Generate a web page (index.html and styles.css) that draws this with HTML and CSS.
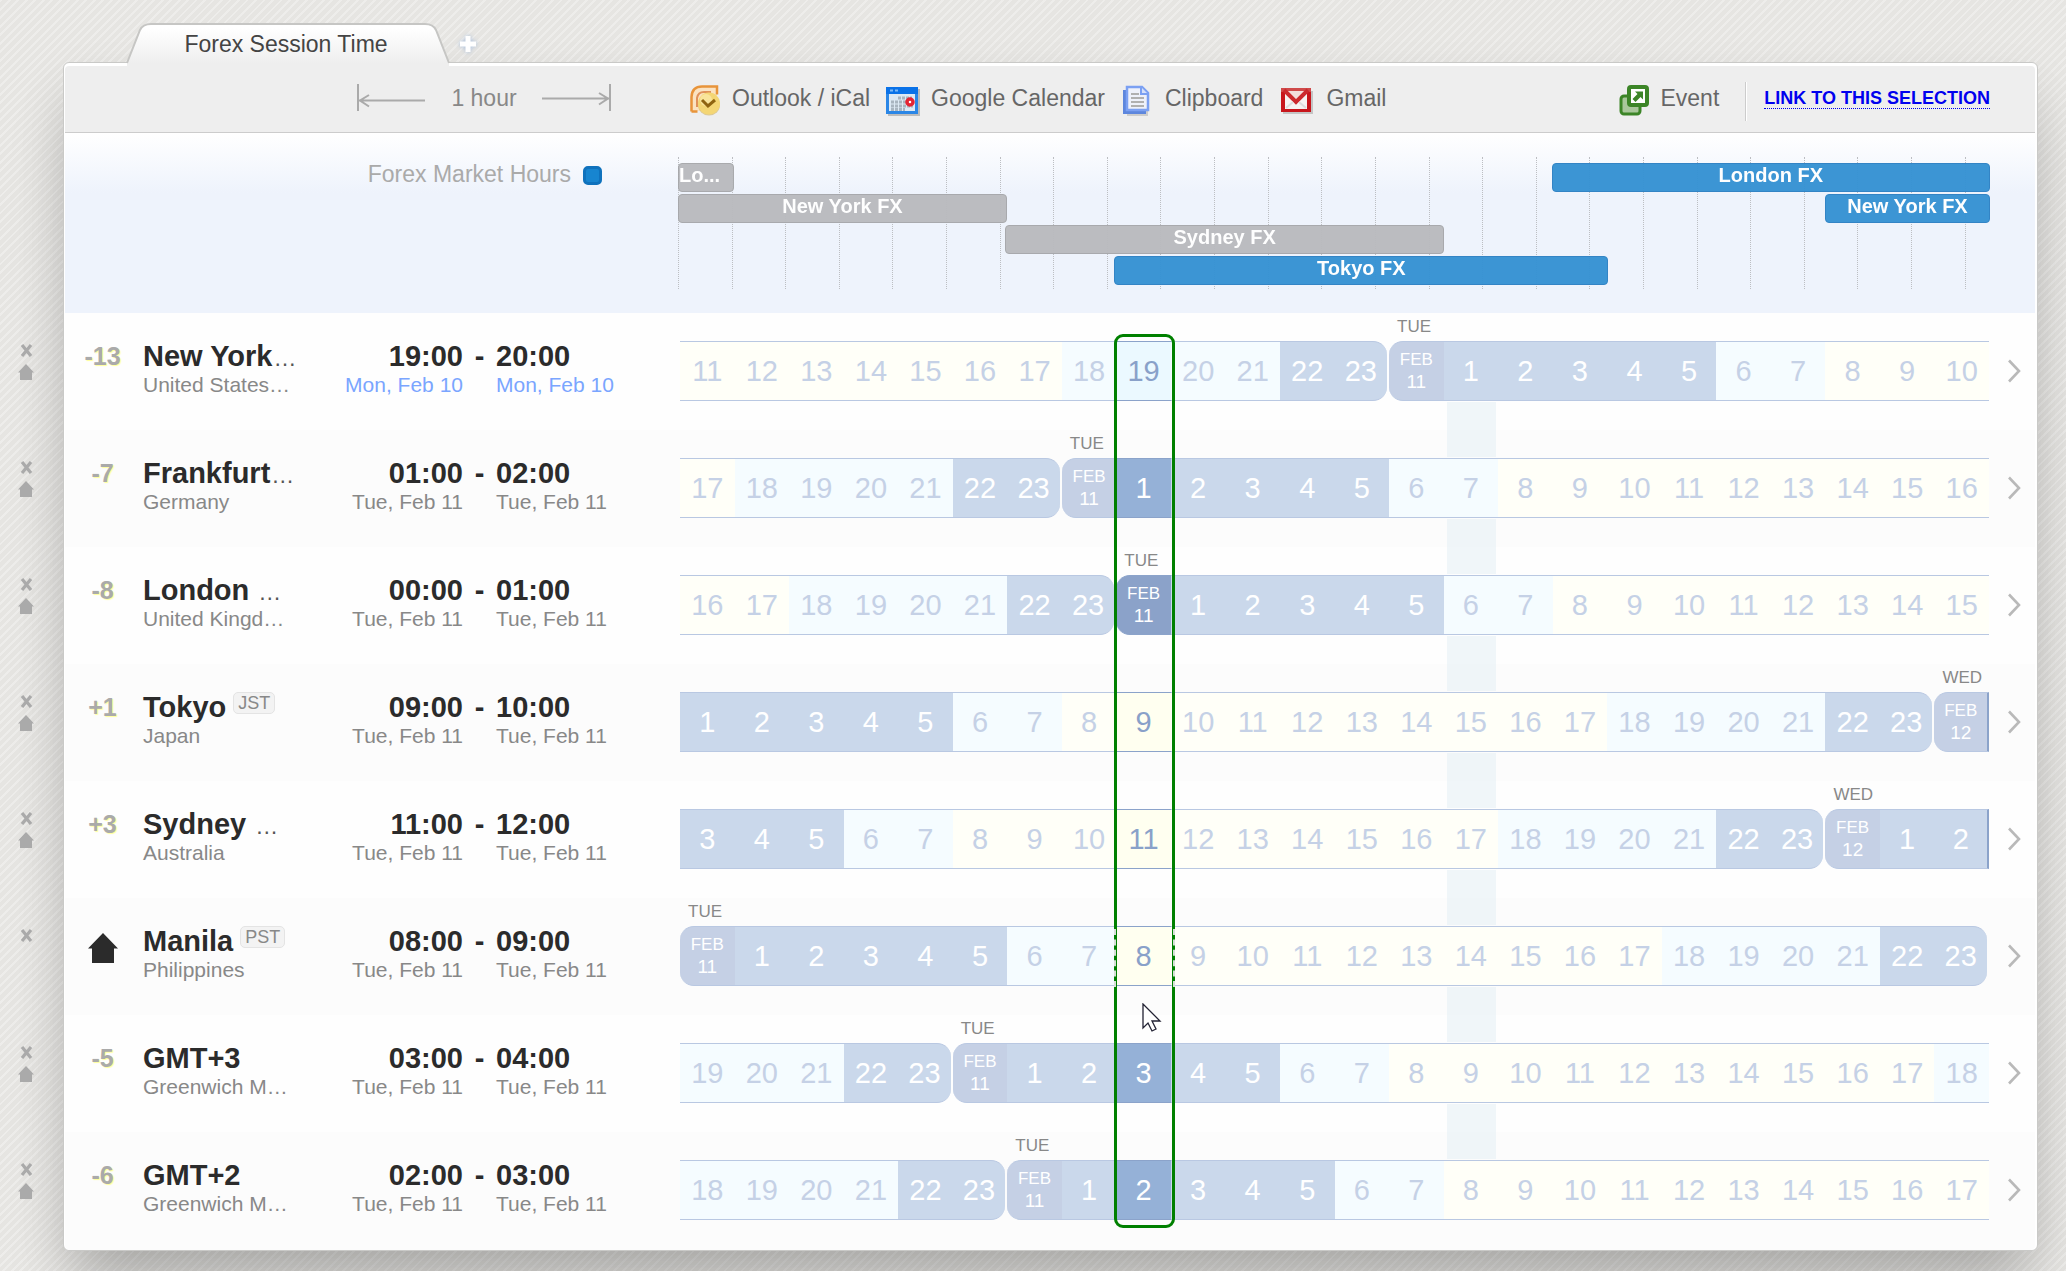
FILE: index.html
```html
<!DOCTYPE html>
<html lang="en">
<head>
<meta charset="utf-8">
<title>Forex Session Time</title>
<link rel="stylesheet" href="styles.css">
</head>
<body>
<svg class="sprites" aria-hidden="true">
  <symbol id="i-close" viewBox="0 0 13 13"><path d="M2 1l9 11M11 1l-9 11" stroke="#aaa" stroke-width="3.2" fill="none"/></symbol>
  <symbol id="i-home" viewBox="0 0 16 16"><path d="M8 0l8 8.500h-2V16H2V8.500H0z" fill="#aaa"/></symbol>
  <symbol id="i-bighome" viewBox="0 0 30 30"><path d="M15 0l15 15.500h-4V30H4V15.500H0z" fill="#2b2b2b"/></symbol>
  <symbol id="i-next" viewBox="0 0 14 24"><path d="M2 1.500l10 10.500L2 22.500" stroke="#b9b9b9" stroke-width="2.600" fill="none"/></symbol>
</svg>
<nav class="tabs">
  <a class="tab" href="#session">
    <svg class="tab-shape" viewBox="0 0 324 43" aria-hidden="true">
      <defs><linearGradient id="tabfill" x1="0" y1="0" x2="0" y2="1"><stop offset=".1" stop-color="#fff"/><stop offset=".95" stop-color="#eee"/></linearGradient></defs>
      <path d="M1 40L14 7Q17 1 25 1H299Q307 1 310 7L323 40V43H1z" fill="url(#tabfill)"/>
      <path d="M1 40L14 7Q17 1 25 1H299Q307 1 310 7L323 40" fill="none" stroke="#c6c6c4" stroke-width="2"/>
    </svg>
    <span class="tab-label">Forex Session Time</span>
  </a>
  <button class="add" aria-label="Add tab"><svg width="20" height="20" viewBox="0 0 20 20"><path d="M10 2v16M2 10h16" stroke="#fff" stroke-width="5"/></svg></button>
</nav>
<main class="panel" id="session">
  <header class="toolbar">
    <div class="duration">
      <svg width="70" height="28" viewBox="0 0 70 28" fill="none" stroke="#aaa" stroke-width="2"><path d="M1 0v27M2 16.500h66M12 11L3 16.500l9 6"/></svg>
      <span>1 hour</span>
      <svg width="70" height="28" viewBox="0 0 70 28" fill="none" stroke="#aaa" stroke-width="2"><path d="M69 0v27M1 14.500h67M58 9l9 5.500-9 6"/></svg>
    </div>
    <div class="exports">
      <button><svg width="32" height="32" viewBox="0 0 32 32"><path d="M2 27V12Q3 2 13 2h15v25z" fill="#fbe3c2"/><path d="M2.500 27.500V13Q3 2.500 13 2.500h15v8M2.500 27.500h6" fill="none" stroke="#e8943a" stroke-width="2.500"/><path d="M8 23V14Q9 8 15 8h7" fill="none" stroke="#e0925a" stroke-width="2"/><ellipse cx="20" cy="21" rx="11" ry="10.500" fill="#c9a440" opacity=".5"/><circle cx="20" cy="19.500" r="11" fill="#f4d674"/><circle cx="17" cy="16" r="6" fill="#fbe9ac" opacity=".7"/><path d="M13 16l6 6 7-6" fill="none" stroke="#8f6410" stroke-width="3"/></svg>Outlook / iCal</button>
      <button><svg width="34" height="32" viewBox="0 0 34 32"><path d="M2 5h32v27H2z" fill="#bbb"/><path d="M0 3h32v27H0z" fill="#2a86e6"/><path d="M0 3h32v7H0z" fill="#0a72e8"/><path d="M3 10h26v17H3z" fill="#dde9f4"/><path d="M4 6.500h3m2 0h3" stroke="#7db9f7" stroke-width="2"/><path d="M12 14h14M5 18h17M5 22h22M5 25.500h14" stroke="#a9b5c0" stroke-width="3" stroke-dasharray="3 1"/><circle cx="24" cy="18" r="3" fill="#fff" stroke="#e42433" stroke-width="3.500"/></svg>Google Calendar</button>
      <button><svg width="29" height="32" viewBox="0 0 29 32"><path d="M4 27h21v5H4z" fill="#ccc"/><path d="M0 6h6v19h17v5H0z" fill="#5d86dd"/><path d="M4 3h15l6 6v17H4z" fill="#eef1fa" stroke="#7ba0f2" stroke-width="2.500"/><path d="M18 3v7h7" fill="#d5e0fa" stroke="#7ba0f2" stroke-width="2"/><path d="M8 10h8M8 14h13M8 18h13M8 22h13" stroke="#b0b0b0" stroke-width="2"/></svg>Clipboard</button>
      <button><svg width="32" height="32" viewBox="0 0 32 32"><path d="M2 7h30v23H2z" fill="#c4c4c4"/><path d="M0 4h30v24H0z" fill="#c8161c"/><path d="M0 4h30v4H0z" fill="#cf4a4a"/><path d="M4 8h22v17H4z" fill="#f6f3f2"/><path d="M4 7h22L15 16z" fill="#f3dedc"/><path d="M3 6l12 12L27 6" fill="none" stroke="#cc2a2e" stroke-width="4"/><path d="M5 24l7-6M25 24l-7-6" stroke="#ddd" stroke-width="2"/></svg>Gmail</button>
    </div>
    <div class="actions">
      <button><svg width="30" height="32" viewBox="0 0 30 32"><rect x="2" y="12" width="19" height="18" rx="3" fill="#a9c79b" stroke="#3c8527" stroke-width="3"/><rect x="10" y="3" width="18" height="18" rx="2" fill="#fff" stroke="#3c8527" stroke-width="4"/><path d="M16 7.500h8v8l-2.500-2.500-5 5-3-3 5-5z" fill="#3c8527"/></svg>Event</button>
      <a class="permalink" href="#selection">LINK TO THIS SELECTION</a>
    </div>
  </header>
  <section class="market">
    <div class="legend"><span>Forex Market Hours</span><i class="swatch"></i></div>
    <div class="sessions">
      <div class="ticks" id="ticks"></div>
      <div class="lane"><div class="fx past clipped" style="grid-column:1 / span 1">Lo...</div><div class="fx" style="grid-column:17 / span 8">London FX</div></div>
      <div class="lane"><div class="fx past" style="grid-column:1 / span 6">New York FX</div><div class="fx" style="grid-column:22 / span 3">New York FX</div></div>
      <div class="lane"><div class="fx past" style="grid-column:7 / span 8">Sydney FX</div></div>
      <div class="lane"><div class="fx" style="grid-column:9 / span 9">Tokyo FX</div></div>
    </div>
  </section>
  <section class="zones" id="zones"></section>
</main>
<svg class="cursor" width="20" height="30" viewBox="0 0 20 30" aria-hidden="true"><path d="M1 1v24l5-5 4 8 4-2-4-8h8z" fill="#fff" stroke="#223" stroke-width="1.300"/></svg>
<script src="app.js"></script>
</body>
</html>
```
FILE: styles.css
```css
* { box-sizing: border-box; }
body {
  margin: 0;
  padding: 23px 28px 20px 63px;
  font-family: "Liberation Sans", Arial, sans-serif;
  color: #2b2b2b;
  background: #e6e5e2;
  position: relative;
  overflow-x: hidden;
}
body::before {
  content: "";
  position: absolute;
  inset: 0;
  z-index: -1;
  background: repeating-linear-gradient(135deg, rgba(255,255,255,.3) 0 2px, transparent 2px 6px);
}
button { font: inherit; color: inherit; border: 0; padding: 0; background: none; cursor: pointer; }
.sprites { display: none; }
svg { display: block; flex: none; }

.tabs { display: flex; align-items: flex-start; gap: 8px; padding-left: 63px; position: relative; z-index: 2; margin-bottom: -4px; }
.tab { position: relative; width: 324px; height: 43px; padding-right: 4px; color: #444; font-size: 23px; line-height: 42px; text-align: center; text-decoration: none; }
.tab-shape { position: absolute; inset: 0; width: 100%; height: 100%; }
.tab-label { position: relative; }
.add { margin-top: 11px; filter: drop-shadow(0 0 2px #a9bedb); }

.panel {
  position: relative;
  padding: 3px 2px 0 1px;
  border: 1px solid #c9c9c7;
  border-radius: 6px;
  background: #fff;
  box-shadow: 0 45px 60px -12px rgba(0,0,0,.22), 0 20px 50px rgba(0,0,0,.08);
}
.toolbar {
  display: flex;
  align-items: center;
  height: 67px;
  padding: 0 45px 2px 292px;
  font-size: 23px;
  color: #666;
  background: #eee;
  border-bottom: 1px solid #ccc;
  border-radius: 4px 4px 0 0;
}
.duration { display: flex; align-items: center; justify-content: space-between; width: 254px; color: #888; }
.exports { display: flex; gap: 16px; margin-left: 78px; }
.exports button, .actions button { display: flex; align-items: center; gap: 11px; white-space: nowrap; }
.exports svg, .actions svg { margin-top: 4px; }
.exports button:nth-child(n+3) { gap: 13px; margin-left: 2px; }
.actions { display: flex; align-items: center; margin-left: auto; }
.permalink {
  margin-left: 45px;
  position: relative;
  font-size: 18px;
  line-height: 20px;
  font-weight: bold;
  color: #00e;
  text-decoration: none;
  border-bottom: 1px dotted #00e;
}
.permalink::before { content: ""; position: absolute; left: -19px; top: -6px; height: 39px; border-left: 1px solid #ccc; border-right: 1px solid #fff; }

.market {
  display: flex;
  height: 180px;
  padding: 24px 45px 0 0;
  background: linear-gradient(#fff, #eef3fc 60px);
}
.legend { display: flex; justify-content: flex-end; width: 537px; gap: 12px; margin-right: 76px; font-size: 23px; line-height: 34px; color: #aaa; }
.swatch { width: 19px; height: 19px; margin-top: 9px; border: 3px solid #0f72bd; border-radius: 5px; background: #1785d0; }
.sessions { position: relative; flex: 1; height: 132px; padding-top: 6px; display: flex; flex-direction: column; gap: 2px; }
.ticks { position: absolute; inset: 0; display: flex; pointer-events: none; }
.ticks i { width: 4.0864%; border-left: 1px dotted #bcbec2; flex: none; }
.lane { position: relative; display: grid; grid-template-columns: repeat(24, 1fr); }
.fx {
  height: 29px;
  margin: 0 -1px 0 -1px;
  border: 1px solid #2c80c3;
  border-radius: 4px;
  background: #3592d3;
  color: #fff;
  font-size: 20px;
  line-height: 23px;
  font-weight: bold;
  text-align: center;
  white-space: nowrap;
  min-width: 0;
  opacity: .96;
}
.lane:nth-child(-n+3) .fx:first-child { margin-left: 0; }
.fx.clipped { text-align: left; }
.lane:nth-child(-n+3) .fx:last-child { margin-right: 0; }
.fx.past { background: #b9babe; border-color: #a6a7aa; }

.zones { position: relative; }
.zone { position: relative; display: flex; height: 117px; padding: 0 14px 0 0; background: #fefefe; }
.zone:last-of-type { height: 118px; border-radius: 0 0 5px 5px; }
.zone:nth-child(even) { background: #fcfcfc; }
.side { position: absolute; left: -47px; top: 31px; display: flex; flex-direction: column; align-items: center; gap: 7px; width: 16px; }
.offset { width: 75px; padding-top: 29px; font-size: 25px; line-height: 28px; font-weight: bold; text-align: center; color: #aaa; text-shadow: 1px 1px 1px #ff9; }
.offset svg { margin: 6px auto 0; }
.place { width: 196px; margin-left: 3px; padding-top: 27px; font-size: 21px; color: #888; white-space: nowrap; }
.name { display: flex; align-items: baseline; gap: 1px; height: 32px; font-size: 23px; line-height: 32px; color: #555; }
.name b { font-size: 29px; color: #2b2b2b; }
.name small { align-self: flex-start; margin: 1px 0 0 6px; padding: 0 4px; border: 1px solid #e4e4e4; border-radius: 5px; background: #f3f3f3; font-size: 18px; line-height: 20px; color: #888; }
.sub { line-height: 26px; }
.times { display: grid; grid-template-columns: 124px 33px 124px; align-content: start; padding-top: 27px; font-size: 21px; line-height: 26px; color: #888; white-space: nowrap; }
.times b { font-size: 29px; line-height: 32px; color: #2b2b2b; }
.times .dash { text-align: center; }
.times .end { text-align: right; }
.alt { color: #7aa5ff; }
.bar { position: relative; z-index: 1; display: grid; grid-template-columns: repeat(24, 1fr); flex: 1; height: 60px; margin: 28px 0 0 60px; }
.bar > span {
  position: relative;
  min-width: 0;
  border: solid #b9c8e2;
  border-width: 1px 0;
  font-size: 29px;
  line-height: 58px;
  text-align: center;
  color: #c5d1e6;
}
.bar .work { background: #fffff8; }
.bar .edge { background: #f5fcff; }
.bar .night { background: #cad8eb; color: #fff; }
.bar .late { border-radius: 0 14px 14px 0; margin-right: 2px; }
.bar .date { display: flex; flex-direction: column; justify-content: center; background: #c5d0e5; color: #fff; font-size: 19px; line-height: 22px; border-radius: 14px 0 0 14px; }
.date small { font-size: 17px; line-height: 22px; }
.date em { position: absolute; left: 8px; top: -25px; font-size: 17px; line-height: 20px; font-style: normal; color: #888; }
.bar .on { border-color: #8ba3ca; color: #89a1c9; }
.bar .work.on { background: #fffff0; }
.bar .edge.on { background: #ebf9ff; }
.bar .night.on { background: #95b1d7; color: #fff; }
.bar .date.on { background: #8ba2c9; color: #fff; }
.bar .tail { border-right: 2px solid #8ba3ca; }
.zone:not(:last-of-type) .bar::after { content: ""; position: absolute; left: 58.6%; top: 61px; width: 49px; height: 55px; background: rgba(200,223,236,.25); }
.next { height: 24px; margin: 46px 0 0 18px; }
.frame { position: absolute; z-index: 3; left: 613px; right: 45px; top: 21px; bottom: 22px; pointer-events: none; }
.frame i { position: absolute; left: 33.2%; top: 0; bottom: 0; width: 61px; border: 3px solid #008000; border-radius: 9px; }
.frame i::before { content: ""; position: absolute; left: -3px; right: -3px; top: 592px; height: 58px; border: dashed #d8dfd8; border-width: 0 2px; }
.cursor { position: absolute; left: 1142px; top: 1003px; z-index: 4; }
```
FILE: app.js
```js
const TICKS = 25;
document.getElementById('ticks').innerHTML = '<i></i>'.repeat(TICKS);

const T = 'Tue, Feb 11';
const zones = [
  { off: '-13', name: 'New York', cut: true, sub: 'United States…', from: '19:00', to: '20:00', d: 'Mon, Feb 10', alt: true, start: 11, day: 'TUE', num: 11 },
  { off: '-7', name: 'Frankfurt', cut: true, sub: 'Germany', from: '01:00', to: '02:00', d: T, start: 17, day: 'TUE', num: 11 },
  { off: '-8', name: 'London&nbsp;', cut: true, sub: 'United Kingd…', from: '00:00', to: '01:00', d: T, start: 16, day: 'TUE', num: 11 },
  { off: '+1', name: 'Tokyo', tag: 'JST', sub: 'Japan', from: '09:00', to: '10:00', d: T, start: 1, day: 'WED', num: 12 },
  { off: '+3', name: 'Sydney&nbsp;', cut: true, sub: 'Australia', from: '11:00', to: '12:00', d: T, start: 3, day: 'WED', num: 12 },
  { home: true, name: 'Manila', tag: 'PST', sub: 'Philippines', from: '08:00', to: '09:00', d: T, start: 0, day: 'TUE', num: 11 },
  { off: '-5', name: 'GMT+3', sub: 'Greenwich M…', from: '03:00', to: '04:00', d: T, start: 19, day: 'TUE', num: 11 },
  { off: '-6', name: 'GMT+2', sub: 'Greenwich M…', from: '02:00', to: '03:00', d: T, start: 18, day: 'TUE', num: 11 }
];
const SELECTED = 8;

function cell(z, i) {
  const h = (z.start + i) % 24;
  const cls = [h < 6 || h > 21 ? 'night' : h < 8 || h > 17 ? 'edge' : 'work'];
  if (h === 23) cls.push('late');
  if (h === 0) cls.push('date');
  if (i === SELECTED) cls.push('on');
  if (i === 23 && h < 6) cls.push('tail');
  const text = h === 0 ? `<em>${z.day}</em><small>FEB</small>${z.num}` : h;
  return `<span class="${cls.join(' ')}">${text}</span>`;
}

function row(z) {
  const cells = Array.from({ length: 24 }, (_, i) => cell(z, i)).join('');
  const c = z.alt ? ' alt' : '';
  return `<article class="zone">
    <div class="side">
      <button aria-label="Remove"><svg width="13" height="13"><use href="#i-close"/></svg></button>
      ${z.home ? '' : '<button aria-label="Set as home"><svg width="16" height="16"><use href="#i-home"/></svg></button>'}
    </div>
    <div class="offset">${z.home ? '<svg width="30" height="30"><use href="#i-bighome"/></svg>' : z.off}</div>
    <div class="place"><div class="name"><b>${z.name}</b>${z.cut ? '…' : ''}${z.tag ? `<small>${z.tag}</small>` : ''}</div><div class="sub">${z.sub}</div></div>
    <div class="times"><b class="end">${z.from}</b><b class="dash">-</b><b>${z.to}</b><span class="end${c}">${z.d}</span><span></span><span class="${c}">${z.d}</span></div>
    <div class="bar">${cells}</div>
    <button class="next" aria-label="Later"><svg width="14" height="24"><use href="#i-next"/></svg></button>
  </article>`;
}
document.getElementById('zones').innerHTML = zones.map(row).join('') + '<div class="frame"><i></i></div>';
```
